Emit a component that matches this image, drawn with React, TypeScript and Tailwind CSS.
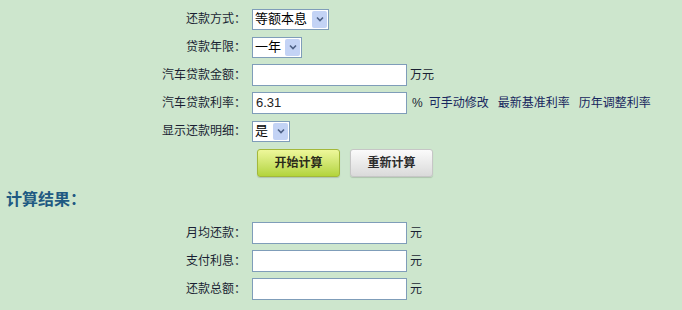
const font = { fontFamily: '"Liberation Sans", "Noto Sans CJK SC", sans-serif' };

function Label({ children }: { children: React.ReactNode }) {
  return <div className="w-[246px] shrink-0 text-right text-[12px] text-[#1a1f33]">{children}</div>;
}

function Select({ value, width }: { value: string; width: string }) {
  return (
    <div className={`ml-[6px] flex h-[21px] items-center border border-[#7f9db9] bg-white pl-[2px] pr-[1px] ${width}`}>
      <span className="flex-1 text-[13px] text-black">{value}</span>
      <span className="flex h-[17px] w-[15px] items-center justify-center rounded-[2px] bg-[#c3d3f5]">
        <svg width="8" height="6" viewBox="0 0 8 6">
          <path d="M1 1.5 L4 4.5 L7 1.5" stroke="#4d6185" strokeWidth="1.6" fill="none" />
        </svg>
      </span>
    </div>
  );
}

function Input({ value = "" }: { value?: string }) {
  return (
    <div className="ml-[6px] flex h-[22px] w-[155px] items-center border border-[#7f9db9] bg-white px-[3px] text-[13px] text-[#222]">
      {value}
    </div>
  );
}

function Row({ children }: { children: React.ReactNode }) {
  return <div className="flex h-[28px] items-center">{children}</div>;
}

export default function App() {
  return (
    <div className="h-[310px] w-[682px] overflow-hidden bg-[#cde6cd] pt-[5px]" style={font}>
      <Row>
        <Label>还款方式：</Label>
        <Select value="等额本息" width="w-[77px]" />
      </Row>
      <Row>
        <Label>贷款年限：</Label>
        <Select value="一年" width="w-[50px]" />
      </Row>
      <Row>
        <Label>汽车贷款金额：</Label>
        <Input />
        <span className="ml-[3px] text-[12px] text-[#1a1f33]">万元</span>
      </Row>
      <Row>
        <Label>汽车贷款利率：</Label>
        <Input value="6.31" />
        <span className="ml-[5px] text-[12px] text-[#1a1f33]">%</span>
        <span className="ml-[6px] flex gap-[9px] text-[12px] text-[#17275e]">
          <a>可手动修改</a>
          <a>最新基准利率</a>
          <a>历年调整利率</a>
        </span>
      </Row>
      <Row>
        <Label>显示还款明细：</Label>
        <Select value="是" width="w-[38px]" />
      </Row>
      <div className="mt-[4px] flex gap-[10px] pl-[257px]">
        <button className="h-[28px] w-[83px] rounded-[3px] border border-[#a3b83a] bg-gradient-to-b from-[#eef79a] to-[#b3d43a] text-[12px] font-bold text-[#2b2b1a] shadow-[0_1px_1px_rgba(0,0,0,0.15)]">
          开始计算
        </button>
        <button className="h-[28px] w-[83px] rounded-[3px] border border-[#c6c6c6] bg-gradient-to-b from-[#fbfbfb] to-[#dadada] text-[12px] font-bold text-[#2b2b2b] shadow-[0_1px_1px_rgba(0,0,0,0.15)]">
          重新计算
        </button>
      </div>
      <div className="mt-[8px] h-[30px] pl-[6px] text-[16px] font-bold leading-[30px] text-[#1f5a82]">计算结果：</div>
      <div className="mt-[4px]">
        <Row>
          <Label>月均还款：</Label>
          <Input />
          <span className="ml-[3px] text-[12px] text-[#1a1f33]">元</span>
        </Row>
        <Row>
          <Label>支付利息：</Label>
          <Input />
          <span className="ml-[3px] text-[12px] text-[#1a1f33]">元</span>
        </Row>
        <Row>
          <Label>还款总额：</Label>
          <Input />
          <span className="ml-[3px] text-[12px] text-[#1a1f33]">元</span>
        </Row>
      </div>
    </div>
  );
}
